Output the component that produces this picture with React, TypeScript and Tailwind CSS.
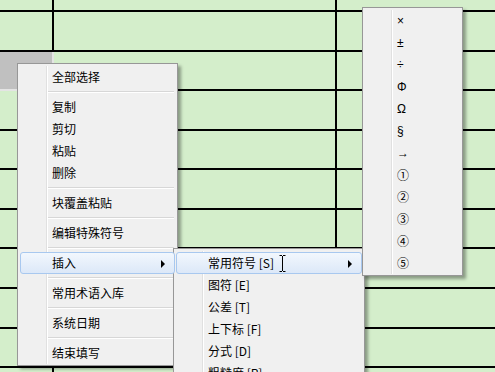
import { ReactNode } from "react";

const rowHeights = [10, 38, 37, 38, 37, 38, 37, 38, 38, 37, 4];

const cjk = { fontFamily: '"Noto Sans CJK SC", "Liberation Sans", sans-serif' };

type ItemProps = {
  label: ReactNode;
  active?: boolean;
  sub?: boolean;
  symbol?: boolean;
};

const Arrow = () => (
  <svg width="5" height="8" viewBox="0 0 5 8" className="absolute right-[8px] top-[7px]">
    <path d="M0 0 L4 4 L0 8 Z" fill="#000" />
  </svg>
);

const MenuItem = ({ label, active, sub, symbol }: ItemProps) => {
  return (
    <div
      className={
        "relative z-10 h-[22px] flex items-center pl-[31px] border rounded-[3px] text-[12px] leading-[22px] text-black " +
        (active
          ? "border-[#a8c8ef] bg-gradient-to-b from-[#f2f7fd] to-[#dce8f8]"
          : "border-transparent")
      }
      style={symbol ? { fontFamily: '"Liberation Sans", "DejaVu Sans", "Noto Sans CJK SC", sans-serif' } : cjk}
    >
      <span className="whitespace-nowrap">{label}</span>
      {sub && <Arrow />}
    </div>
  );
};

const Sep = () => (
  <div className="h-[8px] pt-[3px] ml-[28px] mr-[1px]">
    <div className="h-px bg-[#d7d7d7]" />
    <div className="h-px bg-white" />
  </div>
);

const Menu = ({ className, children }: { className: string; children: ReactNode }) => (
  <div
    className={
      "absolute bg-[#f0f0f0] border border-[#979797] px-[2px] pt-[2px] pb-[1px] shadow-[3px_3px_3px_rgba(0,0,0,0.35)] " +
      className
    }
  >
    <div className="absolute top-[2px] bottom-[1px] left-[28px] w-[2px] flex">
      <div className="w-px bg-[#e0e0e0]" />
      <div className="w-px bg-white" />
    </div>
    {children}
  </div>
);

const Grid = () => (
  <div className="flex flex-col">
    {rowHeights.map((h, i) => (
      <div key={i} className="flex">
        <div
          className={
            "w-[54px] border-r-2 border-b-2 " +
            (i === 2 ? "bg-[#c0c0c0] border-[#e4e4e4]" : "border-black")
          }
          style={{ height: h + 2 }}
        />
        <div className="w-[283px] border-r-2 border-b-2 border-black" style={{ height: h + 2 }} />
        <div className="flex-1 border-b-2 border-black" style={{ height: h + 2 }} />
      </div>
    ))}
  </div>
);

const circled = (c: string) => <span style={cjk}>{c}</span>;

export default function App() {
  return (
    <div className="relative w-[495px] h-[372px] overflow-hidden bg-[#d4eecb]">
      <Grid />

      <Menu className="left-[17px] top-[63px] w-[161px]">
        <MenuItem label="全部选择" />
        <Sep />
        <MenuItem label="复制" />
        <MenuItem label="剪切" />
        <MenuItem label="粘贴" />
        <MenuItem label="删除" />
        <Sep />
        <MenuItem label="块覆盖粘贴" />
        <Sep />
        <MenuItem label="编辑特殊符号" />
        <Sep />
        <MenuItem label="插入" active sub />
        <Sep />
        <MenuItem label="常用术语入库" />
        <Sep />
        <MenuItem label="系统日期" />
        <Sep />
        <MenuItem label="结束填写" />
      </Menu>

      <Menu className="left-[173px] top-[248px] w-[192px] pt-[3px]">
        <MenuItem label="常用符号 [S]" active sub />
        <MenuItem label="图符 [E]" />
        <MenuItem label="公差 [T]" />
        <MenuItem label="上下标 [F]" />
        <MenuItem label="分式 [D]" />
        <MenuItem label="粗糙度 [R]" />
      </Menu>

      <svg width="7" height="17" viewBox="0 0 7 17" className="absolute left-[279px] top-[255px] z-20">
        <path d="M0.5 0.5h2.5M4 0.5h2.5M3.5 1v15M0.5 16.5h2.5M4 16.5h2.5" stroke="#000" strokeWidth="1" fill="none" />
      </svg>

      <Menu className="left-[362px] top-[7px] w-[101px]">
        <MenuItem symbol label="×" />
        <MenuItem symbol label="±" />
        <MenuItem symbol label="÷" />
        <MenuItem symbol label="Φ" />
        <MenuItem symbol label="Ω" />
        <MenuItem symbol label="§" />
        <MenuItem symbol label="→" />
        <MenuItem symbol label={circled("①")} />
        <MenuItem symbol label={circled("②")} />
        <MenuItem symbol label={circled("③")} />
        <MenuItem symbol label={circled("④")} />
        <MenuItem symbol label={circled("⑤")} />
      </Menu>
    </div>
  );
}
